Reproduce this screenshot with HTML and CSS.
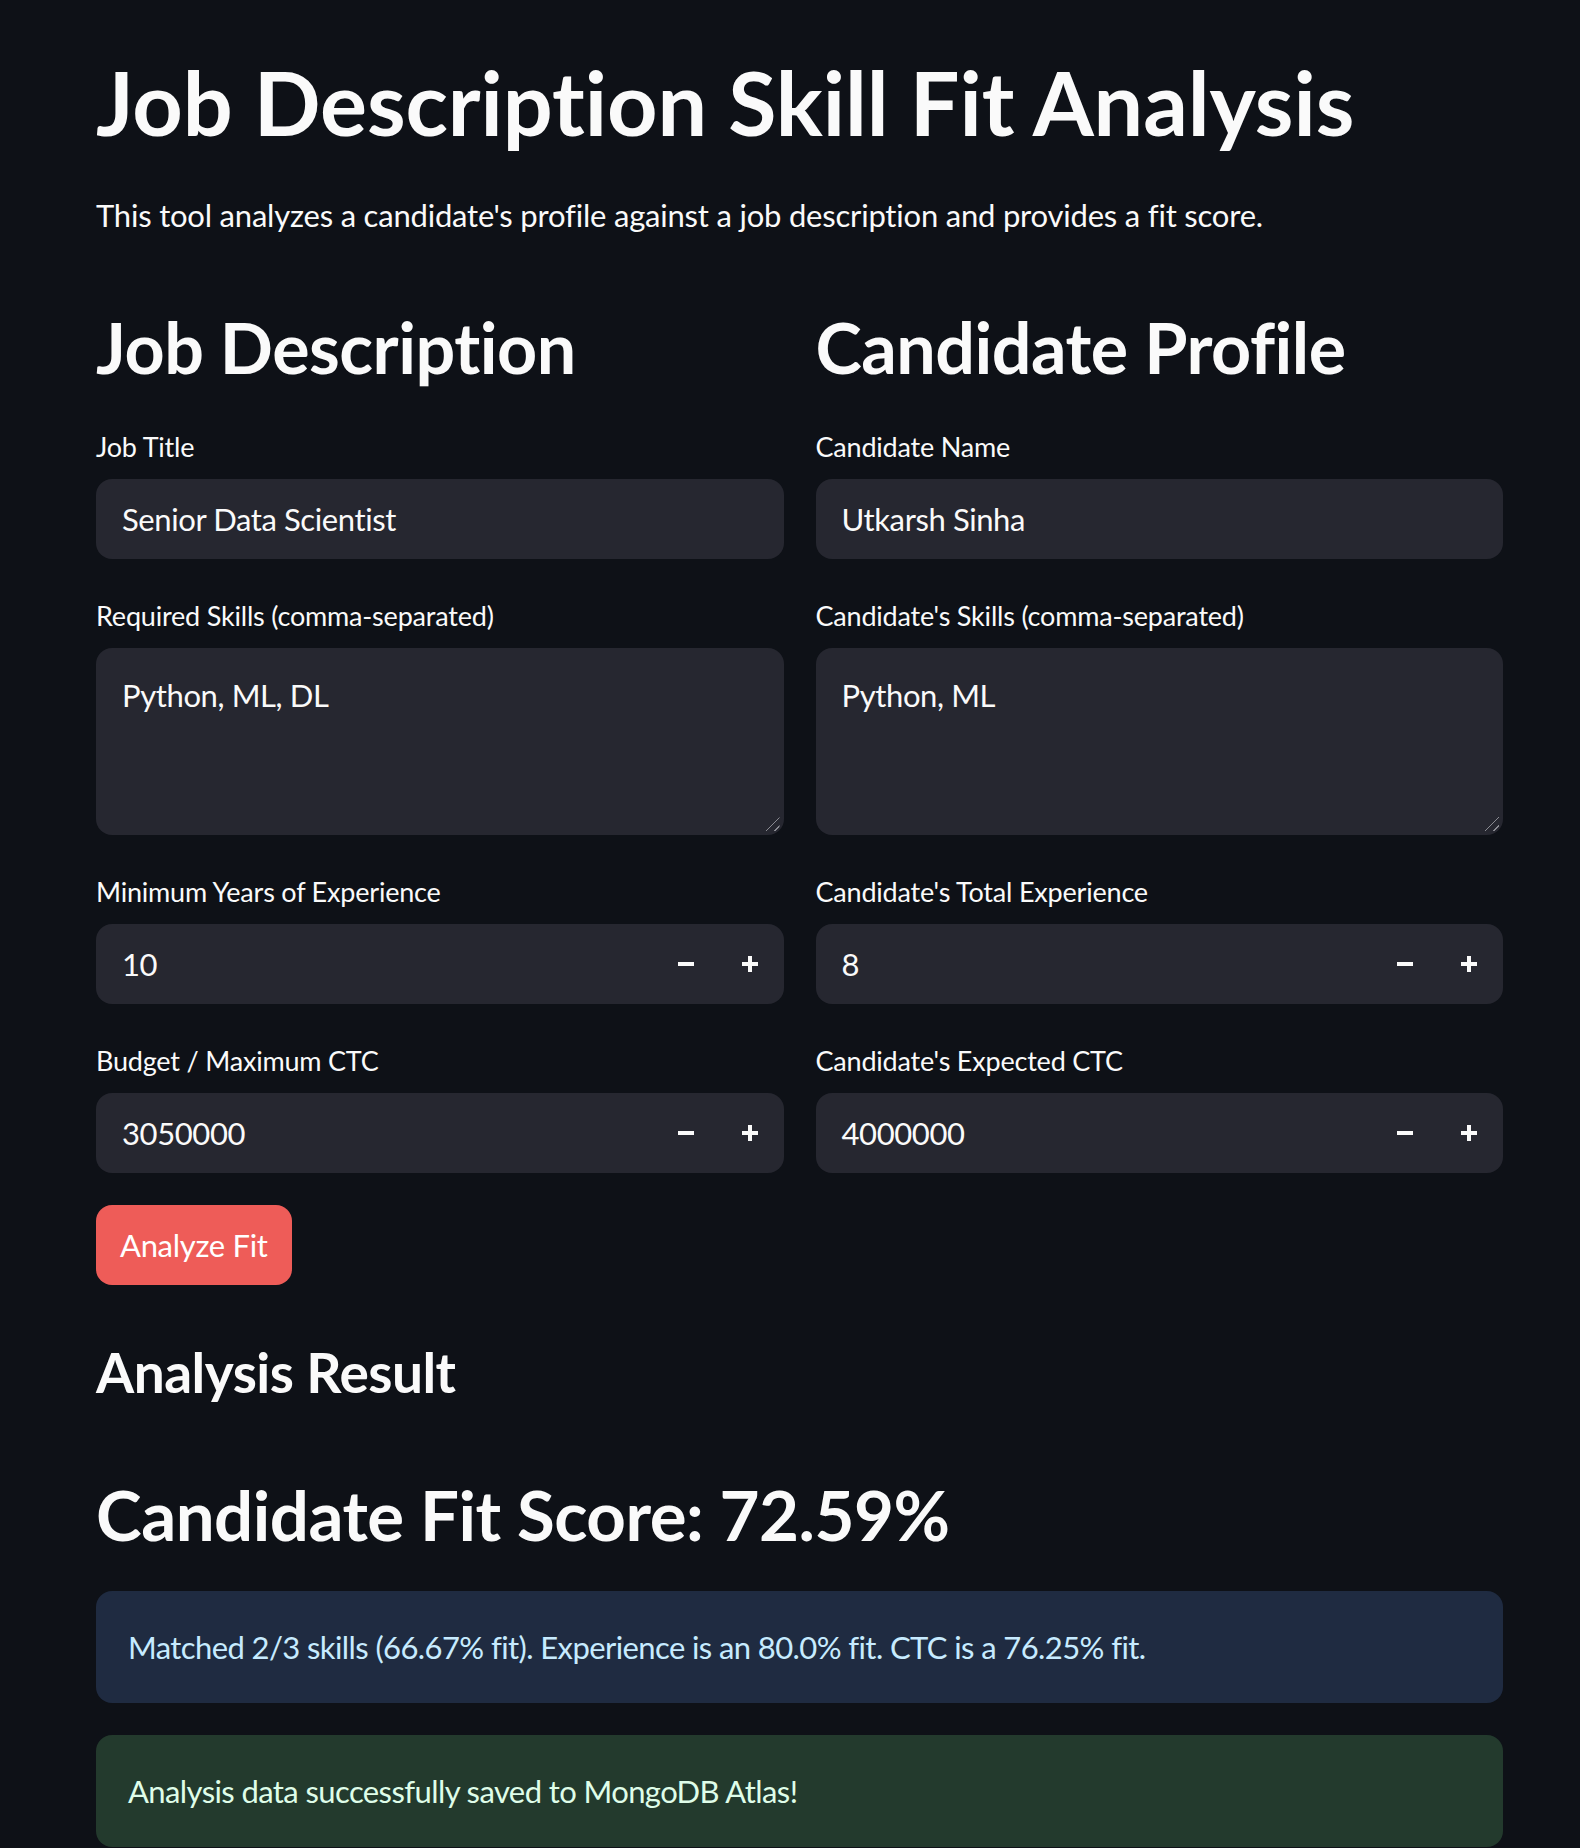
FILE: index.html
```html
<!DOCTYPE html>
<html lang="en">
<head>
<meta charset="utf-8">
<title>Job Description Skill Fit Analysis</title>
<link rel="stylesheet" href="styles.css">
</head>
<body>
<main class="page">
  <h1 class="title">Job Description Skill Fit Analysis</h1>
  <p class="intro">This tool analyzes a candidate's profile against a job description and provides a fit score.</p>

  <div class="columns">
    <section class="col">
      <h2 class="col-head">Job Description</h2>
      <div class="field">
        <label class="label">Job Title</label>
        <div class="input">Senior Data Scientist</div>
      </div>
      <div class="field">
        <label class="label">Required Skills (comma-separated)</label>
        <div class="textarea">Python, ML, DL<span class="grip"></span></div>
      </div>
      <div class="field">
        <label class="label">Minimum Years of Experience</label>
        <div class="input number"><span class="val">10</span><span class="step minus"></span><span class="step plus"></span></div>
      </div>
      <div class="field">
        <label class="label">Budget / Maximum CTC</label>
        <div class="input number"><span class="val">3050000</span><span class="step minus"></span><span class="step plus"></span></div>
      </div>
    </section>
    <section class="col">
      <h2 class="col-head">Candidate Profile</h2>
      <div class="field">
        <label class="label">Candidate Name</label>
        <div class="input">Utkarsh Sinha</div>
      </div>
      <div class="field">
        <label class="label">Candidate's Skills (comma-separated)</label>
        <div class="textarea">Python, ML<span class="grip"></span></div>
      </div>
      <div class="field">
        <label class="label">Candidate's Total Experience</label>
        <div class="input number"><span class="val">8</span><span class="step minus"></span><span class="step plus"></span></div>
      </div>
      <div class="field">
        <label class="label">Candidate's Expected CTC</label>
        <div class="input number"><span class="val">4000000</span><span class="step minus"></span><span class="step plus"></span></div>
      </div>
    </section>
  </div>

  <button class="btn">Analyze Fit</button>

  <h3 class="result-head">Analysis Result</h3>
  <h1 class="score">Candidate Fit Score: 72.59%</h1>

  <div class="alert info">Matched 2/3 skills (66.67% fit). Experience is an 80.0% fit. CTC is a 76.25% fit.</div>
  <div class="alert success">Analysis data successfully saved to MongoDB Atlas!</div>
</main>
</body>
</html>
```

FILE: styles.css
```css
* { box-sizing: border-box; }
html, body {
  margin: 0;
  padding: 0;
  background: #0e1117;
  color: #fafafa;
  font-family: "Lato", "Source Sans Pro", sans-serif;
}
.page {
  width: 1407px;
  margin-left: 96px;
  padding-top: 50px;
}
.title {
  margin: 0;
  font-size: 88px;
  font-weight: 700;
  line-height: 1.2;
  letter-spacing: -0.1px;
}
.intro {
  margin: 38px 0 0;
  font-size: 31px;
  line-height: 1.4;
  letter-spacing: -0.2px;
}
.columns {
  display: grid;
  grid-template-columns: 1fr 1fr;
  column-gap: 32px;
  margin-top: 68px;
}
.col-head {
  margin: 0 0 40px;
  font-size: 70px;
  font-weight: 700;
  line-height: 1.2;
  letter-spacing: -0.5px;
}
.field { margin-bottom: 39px; }
.field:last-child { margin-bottom: 0; }
.label {
  display: block;
  font-size: 27px;
  line-height: 36px;
  height: 36px;
  margin-bottom: 14px;
  letter-spacing: -0.2px;
}
.input {
  height: 80px;
  background: #262730;
  border-radius: 16px;
  display: flex;
  align-items: center;
  padding-left: 26px;
  font-size: 31px;
  letter-spacing: -0.4px;
}
.number .val { flex: 1; }
.step {
  width: 64px;
  height: 80px;
  position: relative;
}
.step::before, .step::after {
  content: "";
  position: absolute;
  background: #fafafa;
  left: 50%;
  top: 50%;
}
.minus::before { width: 16px; height: 4px; margin: -2px 0 0 -10px; }
.minus::after { display: none; }
.plus::before { width: 16px; height: 4px; margin: -2px 0 0 -10px; }
.plus::after { width: 4px; height: 16px; margin: -8px 0 0 -4px; }
.textarea {
  height: 187px;
  background: #262730;
  border-radius: 16px;
  padding: 27px 26px;
  font-size: 31px;
  line-height: 40px;
  letter-spacing: -0.4px;
  position: relative;
}
.grip {
  position: absolute;
  right: 4px;
  bottom: 4px;
  width: 18px;
  height: 18px;
  background: repeating-linear-gradient(135deg, transparent 0 3px, #8a8b92 3px 4px, transparent 4px 6px);
  clip-path: polygon(100% 0, 100% 100%, 0 100%);
}
.btn {
  display: block;
  margin-top: 32px;
  height: 80px;
  padding: 0 24px;
  background: #ee5c58;
  color: #fff;
  border: none;
  border-radius: 16px;
  font-family: inherit;
  font-size: 31px;
  letter-spacing: -0.3px;
}
.result-head {
  margin: 54px 0 0;
  font-size: 55px;
  font-weight: 700;
  line-height: 1.2;
  letter-spacing: -0.5px;
}
.score {
  margin: 69px 0 0;
  font-size: 69px;
  font-weight: 700;
  line-height: 1.2;
  letter-spacing: -0.5px;
}
.alert {
  border-radius: 16px;
  padding: 0 32px;
  height: 112px;
  display: flex;
  align-items: center;
  font-size: 31px;
  letter-spacing: -0.6px;
}
.info {
  margin-top: 34px;
  background: #1f2b41;
  color: #c7ebff;
}
.success {
  margin-top: 32px;
  background: #233a2d;
  color: #dffde9;
}
```
